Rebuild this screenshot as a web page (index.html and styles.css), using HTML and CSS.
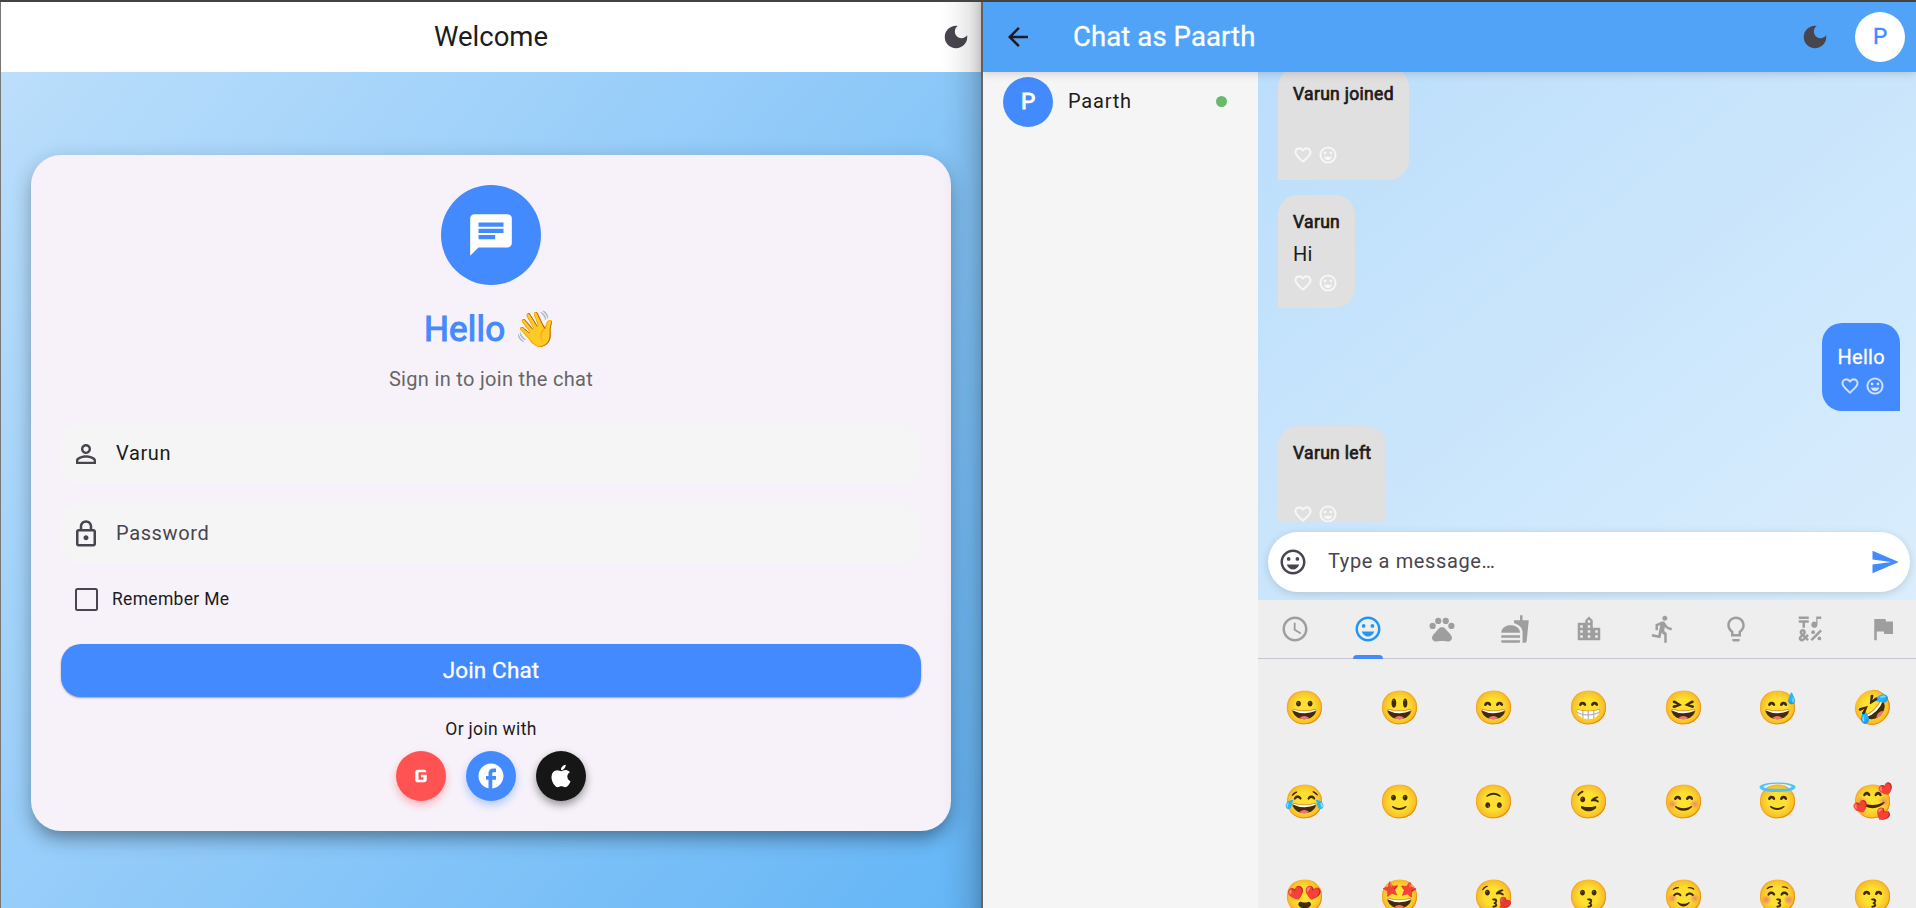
FILE: index.html
```
<!DOCTYPE html>
<html lang="en">
<head>
<meta charset="utf-8">
<title>Chat</title>
<link rel="stylesheet" href="styles.css">
</head>
<body>
<svg class="defs" width="0" height="0">
  <symbol id="moon" viewBox="0 0 24 24"><path d="M12 3C7.03 3 3 7.03 3 12s4.03 9 9 9 9-4.03 9-9c0-.46-.04-.92-.1-1.36C19.92 12.01 18.32 12.9 16.5 12.9 13.52 12.9 11.1 10.48 11.1 7.5 11.1 5.69 11.99 4.08 13.36 3.1 12.92 3.04 12.46 3 12 3z"/></symbol>
  <symbol id="smile" viewBox="0 0 24 24"><path d="M11.99 2C6.47 2 2 6.48 2 12s4.47 10 9.99 10C17.52 22 22 17.52 22 12S17.52 2 11.99 2zM12 20c-4.42 0-8-3.58-8-8s3.58-8 8-8 8 3.58 8 8-3.58 8-8 8z"/><circle cx="8.5" cy="9.5" r="1.5"/><circle cx="15.5" cy="9.5" r="1.5"/><path d="M12 18c2.28 0 4.22-1.66 5-4H7c.78 2.34 2.72 4 5 4z"/></symbol>
  <symbol id="heart" viewBox="0 0 24 24"><path d="M16.5 3c-1.74 0-3.41.81-4.5 2.09C10.91 3.81 9.24 3 7.5 3 4.42 3 2 5.42 2 8.5c0 3.78 3.4 6.86 8.55 11.54L12 21.35l1.45-1.32C18.6 15.36 22 12.28 22 8.5 22 5.42 19.58 3 16.5 3zm-4.4 15.55l-.1.1-.1-.1C7.14 14.24 4 11.39 4 8.5 4 6.5 5.5 5 7.5 5c1.54 0 3.04.99 3.57 2.36h1.87C13.46 5.99 14.96 5 16.5 5c2 0 3.5 1.5 3.5 3.5 0 2.89-3.14 5.74-7.9 10.05z"/></symbol>
</svg>

<div class="screen">
  <section class="login">
    <header class="login-bar">
      <h1 class="bar-title">Welcome</h1>
      <svg class="icon moon"><use href="#moon"/></svg>
    </header>
    <main class="login-body">
      <div class="card">
        <div class="logo">
          <svg class="logo-icon" viewBox="0 0 24 24"><path d="M20 2H4c-1.1 0-1.99.9-1.99 2L2 22l4-4h14c1.1 0 2-.9 2-2V4c0-1.1-.9-2-2-2zM6 9h12v2H6V9zm8 5H6v-2h8v2zm4-6H6V6h12v2z"/></svg>
        </div>
        <h2 class="hello">Hello <span class="wave">👋</span></h2>
        <p class="subtitle">Sign in to join the chat</p>
        <div class="field">
          <svg class="icon" viewBox="0 0 24 24"><path d="M12 5.9c1.16 0 2.1.94 2.1 2.1s-.94 2.1-2.1 2.1S9.9 9.16 9.9 8s.94-2.1 2.1-2.1m0 9c2.97 0 6.1 1.46 6.1 2.1v1.1H5.9V17c0-.64 3.13-2.1 6.1-2.1M12 4C9.79 4 8 5.79 8 8s1.79 4 4 4 4-1.79 4-4-1.79-4-4-4zm0 9c-2.67 0-8 1.34-8 4v3h16v-3c0-2.66-5.33-4-8-4z"/></svg>
          <span class="field-value">Varun</span>
        </div>
        <div class="field">
          <svg class="icon" viewBox="0 0 24 24"><path d="M18 8h-1V6c0-2.76-2.24-5-5-5S7 3.24 7 6v2H6c-1.1 0-2 .9-2 2v10c0 1.1.9 2 2 2h12c1.1 0 2-.9 2-2V10c0-1.1-.9-2-2-2zM9 6c0-1.66 1.34-3 3-3s3 1.34 3 3v2H9V6zm9 14H6V10h12v10zm-6-3c1.1 0 2-.9 2-2s-.9-2-2-2-2 .9-2 2 .9 2 2 2z"/></svg>
          <span class="field-hint">Password</span>
        </div>
        <label class="remember"><span class="box"></span>Remember Me</label>
        <button class="join">Join Chat</button>
        <p class="or">Or join with</p>
        <div class="social">
          <span class="social-btn google"><svg class="icon" viewBox="0 0 24 24"><path d="M12 11v2h2v2h-4V9h6.2V8.5c0-.9-.7-1.6-1.6-1.6H9.4c-1.2 0-2 .9-2 2v6.2c0 1.2.9 2 2 2h5.2c1.1 0 2-.9 2-2V11z"/></svg></span>
          <span class="social-btn facebook"><svg class="icon" viewBox="0 0 24 24"><path d="M22 12c0-5.52-4.48-10-10-10S2 6.48 2 12c0 4.84 3.44 8.87 8 9.8V15H8v-3h2V9.5C10 7.57 11.57 6 13.5 6H16v3h-2c-.55 0-1 .45-1 1v2h3v3h-3v6.95c5.05-.5 9-4.76 9-9.95z"/></svg></span>
          <span class="social-btn apple"><svg class="icon" viewBox="0 0 24 24"><path d="M17.05 20.28c-.98.95-2.05.8-3.08.35-1.09-.46-2.09-.48-3.24 0-1.44.62-2.2.44-3.06-.35C2.79 15.25 3.51 7.59 9.05 7.31c1.35.07 2.29.74 3.08.8 1.18-.24 2.31-.93 3.57-.84 1.51.12 2.65.72 3.4 1.8-3.12 1.87-2.38 5.98.48 7.13-.57 1.5-1.31 2.99-2.54 4.09zM12.03 7.25c-.15-2.23 1.66-4.07 3.74-4.25.29 2.58-2.34 4.5-3.74 4.25z"/></svg></span>
        </div>
      </div>
    </main>
    <div class="edge-shade"></div>
  </section>

  <section class="chat">
    <header class="chat-bar">
      <svg class="icon back" viewBox="0 0 24 24"><path d="M20 11H7.83l5.59-5.59L12 4l-8 8 8 8 1.41-1.41L7.83 13H20v-2z"/></svg>
      <h1 class="bar-title chat-title">Chat as Paarth</h1>
      <svg class="icon moon"><use href="#moon"/></svg>
      <span class="avatar avatar-light">P</span>
    </header>
    <div class="chat-body">
      <aside class="users">
        <div class="user"><span class="avatar">P</span><span class="user-name">Paarth</span><span class="online"></span></div>
      </aside>
      <main class="room">
        <div class="messages">
          <div class="bubble"><b class="author">Varun joined</b><p class="text"></p><div class="react"><svg><use href="#heart"/></svg><svg><use href="#smile"/></svg></div></div>
          <div class="bubble"><b class="author">Varun</b><p class="text">Hi</p><div class="react"><svg><use href="#heart"/></svg><svg><use href="#smile"/></svg></div></div>
          <div class="bubble mine"><p class="text">Hello</p><div class="react"><svg><use href="#heart"/></svg><svg><use href="#smile"/></svg></div></div>
          <div class="bubble"><b class="author">Varun left</b><p class="text"></p><div class="react"><svg><use href="#heart"/></svg><svg><use href="#smile"/></svg></div></div>
        </div>
        <div class="composer">
          <svg class="icon"><use href="#smile"/></svg>
          <span class="placeholder">Type a message…</span>
          <svg class="icon send" viewBox="0 0 24 24"><path d="M2.01 21L23 12 2.01 3 2 10l15 2-15 2z"/></svg>
        </div>
        <div class="picker">
          <nav class="tabs">
            <span class="tab"><svg class="icon" viewBox="0 0 24 24"><path d="M11.99 2C6.47 2 2 6.48 2 12s4.47 10 9.99 10C17.52 22 22 17.52 22 12S17.52 2 11.99 2zM12 20c-4.42 0-8-3.58-8-8s3.58-8 8-8 8 3.58 8 8-3.58 8-8 8zm.5-13H11v6l5.25 3.15.75-1.23-4.5-2.67z"/></svg></span>
            <span class="tab active"><svg class="icon"><use href="#smile"/></svg></span>
            <span class="tab"><svg class="icon" viewBox="0 0 24 24"><circle cx="4.5" cy="9.5" r="2.5"/><circle cx="9" cy="5.5" r="2.5"/><circle cx="15" cy="5.5" r="2.5"/><circle cx="19.5" cy="9.5" r="2.5"/><path d="M17.34 14.86c-.87-1.02-1.6-1.89-2.48-2.91-.46-.54-1.05-1.08-1.75-1.32-.11-.04-.22-.07-.33-.09-.25-.04-.52-.04-.78-.04s-.53 0-.79.05c-.11.02-.22.05-.33.09-.7.24-1.28.78-1.75 1.32-.87 1.02-1.6 1.89-2.48 2.91-1.31 1.31-2.92 2.76-2.62 4.79.29 1.02 1.02 2.03 2.33 2.32.73.15 3.06-.44 5.54-.44h.18c2.48 0 4.81.58 5.54.44 1.31-.29 2.04-1.31 2.33-2.32.31-2.04-1.3-3.49-2.61-4.8z"/></svg></span>
            <span class="tab"><svg class="icon" viewBox="0 0 24 24"><path d="M18.06 22.99h1.66c.84 0 1.53-.64 1.63-1.46L23 5.05h-5V1h-1.97v4.05h-4.97l.3 2.34c1.71.47 3.31 1.32 4.27 2.26 1.44 1.42 2.43 2.89 2.43 5.29v8.05zM1 21.99V21h15.03v.99c0 .55-.45 1-1.01 1H2.01c-.56 0-1.01-.45-1.01-1zm15.03-7c0-8-15.03-8-15.03 0h15.03zM1.02 17h15v2h-15z"/></svg></span>
            <span class="tab"><svg class="icon" viewBox="0 0 24 24"><path d="M15 11V5l-3-3-3 3v2H3v14h18V11h-6zm-8 8H5v-2h2v2zm0-4H5v-2h2v2zm0-4H5V9h2v2zm6 8h-2v-2h2v2zm0-4h-2v-2h2v2zm0-4h-2V9h2v2zm0-4h-2V5h2v2zm6 12h-2v-2h2v2zm0-4h-2v-2h2v2z"/></svg></span>
            <span class="tab"><svg class="icon" viewBox="0 0 24 24"><path d="M13.49 5.48c1.1 0 2-.9 2-2s-.9-2-2-2-2 .9-2 2 .9 2 2 2zm-3.6 13.9l1-4.4 2.1 2v6h2v-7.5l-2.1-2 .6-3c1.3 1.5 3.3 2.5 5.5 2.5v-2c-1.9 0-3.5-1-4.3-2.4l-1-1.6c-.4-.6-1-1-1.7-1-.3 0-.5.1-.8.1l-5.2 2.2v4.7h2v-3.4l1.8-.7-1.6 8.1-4.9-1-.4 2 7 1.4z"/></svg></span>
            <span class="tab"><svg class="icon" viewBox="0 0 24 24"><path d="M9 20h6v.8c0 .7-.5 1.2-1.2 1.2h-3.6c-.7 0-1.2-.5-1.2-1.2zM12 2C8.14 2 5 5.14 5 9c0 2.38 1.19 4.47 3 5.74V18h8v-3.26c1.81-1.27 3-3.36 3-5.74 0-3.86-3.14-7-7-7zm2.85 11.1l-.85.6V16h-4v-2.3l-.85-.6A5 5 0 0 1 7 9c0-2.76 2.24-5 5-5s5 2.24 5 5c0 1.63-.8 3.16-2.15 4.1z"/></svg></span>
            <span class="tab"><svg class="icon" viewBox="0 0 24 24"><path d="M3 2h8v2H3zM6 11h2V7h3V5H3v2h3zM12.404 20.182l7.778-7.778 1.414 1.414-7.778 7.778z"/><circle cx="14.5" cy="14.5" r="1.5"/><circle cx="19.5" cy="19.5" r="1.5"/><path d="M15.5 11c1.38 0 2.5-1.12 2.5-2.5V4h3V2h-4v4.51c-.42-.32-.93-.51-1.5-.51C14.12 6 13 7.12 13 8.5s1.12 2.5 2.5 2.5z"/><path d="M9.74 15.96l-1.41 1.41-.71-.71.35-.35c.98-.98.98-2.56 0-3.54-.49-.49-1.13-.73-1.77-.73-.64 0-1.28.24-1.77.73-.98.98-.98 2.56 0 3.54l.35.35-1.06 1.06c-.98.98-.98 2.56 0 3.54.5.5 1.14.74 1.78.74s1.28-.24 1.77-.73l1.06-1.06 1.41 1.41 1.41-1.41-1.41-1.41 1.41-1.41-1.41-1.43zM5.85 14.2c.12-.12.26-.15.35-.15s.23.03.35.15c.19.2.19.51 0 .71l-.35.35-.35-.36c-.19-.19-.19-.51 0-.7zm0 5.65c-.12.12-.26.15-.35.15s-.23-.03-.35-.15c-.19-.2-.19-.51 0-.71L6.2 18.08l.71.71-1.06 1.06z"/></svg></span>
            <span class="tab"><svg class="icon" viewBox="0 0 24 24"><path d="M14.4 6L14 4H5v17h2v-7h5.6l.4 2h7V6z"/></svg></span>
          </nav>
          <div class="emojis">
            <span>😀</span><span>😃</span><span>😄</span><span>😁</span><span>😆</span><span>😅</span><span>🤣</span>
            <span>😂</span><span>🙂</span><span>🙃</span><span>😉</span><span>😊</span><span>😇</span><span>🥰</span>
            <span>😍</span><span>🤩</span><span>😘</span><span>😗</span><span>☺️</span><span>😚</span><span>😙</span>
          </div>
        </div>
      </main>
    </div>
  </section>
</div>
</body>
</html>
```
FILE: styles.css
```
* { box-sizing: border-box; }
body {
  margin: 0;
  font-family: Roboto, "Noto Color Emoji", sans-serif;
  color: #1d1b20;
  overflow: hidden;
}
h1, h2, p { margin: 0; }
svg { display: block; fill: currentColor; }
.defs { position: absolute; }
.icon { width: 30px; height: 30px; flex: none; }
.screen {
  display: flex;
  width: 1916px;
  height: 908px;
  border-top: 2px solid #444;
}

/* Login window */
.login {
  position: relative;
  width: 981px;
  display: flex;
  flex-direction: column;
  border-left: 1px solid #777;
}
.login-bar {
  height: 70px;
  padding: 0 10px 0 40px;
  display: flex;
  align-items: center;
  background: #fff;
}
.bar-title {
  flex: 1;
  margin-top: -2px;
  text-align: center;
  font-size: 27.5px;
  font-weight: 400;
  line-height: 35px;
}
.moon { color: #49454f; }
.login-body {
  flex: 1;
  display: flex;
  flex-direction: column;
  justify-content: center;
  padding: 6px 30px 0;
  background: linear-gradient(130.5deg, #bbdefb, #90caf9 50%, #64b5f6);
}
.card {
  height: 676px;
  padding: 30px;
  display: flex;
  flex-direction: column;
  align-items: center;
  border-radius: 30px;
  background: #f7f2fa;
  box-shadow: 0 10px 14px -5px rgba(0,0,0,.22), 0 8px 20px 1px rgba(0,0,0,.17), 0 4px 24px 2px rgba(0,0,0,.06);
}
.logo {
  width: 100px;
  height: 100px;
  flex: none;
  display: grid;
  place-items: center;
  border-radius: 50%;
  background: #448aff;
  color: #fff;
}
.logo-icon { width: 50px; height: 50px; }
.hello {
  margin-top: 20px;
  height: 50px;
  line-height: 50px;
  font-size: 35px;
  font-weight: 400;
  letter-spacing: .2px;
  -webkit-text-stroke: 1.1px currentColor;
  color: #448aff;
}
.subtitle {
  margin-top: 9px;
  line-height: 30px;
  font-size: 20px;
  letter-spacing: .3125px;
  color: #666;
}
.field {
  width: 100%;
  height: 60px;
  margin-top: 20px;
  padding: 0 10px;
  display: flex;
  align-items: center;
  gap: 15px;
  border-radius: 20px;
  background: #f5f5f5;
  font-size: 20px;
  letter-spacing: .625px;
  color: #49454f;
}
.subtitle + .field { margin-top: 30px; }
.field-value { color: #1d1b20; }
.field-value, .field-hint { margin-top: -1px; }
.remember {
  align-self: flex-start;
  height: 50px;
  margin: 11px 0 0 14px;
  display: flex;
  align-items: center;
  gap: 14px;
  font-size: 17.5px;
  letter-spacing: .3125px;
}
.box {
  width: 23px;
  height: 23px;
  border: 2.5px solid #49454f;
  border-radius: 2.5px;
}
.join {
  width: 100%;
  height: 53px;
  margin-top: 20px;
  padding: 0 0 2px;
  border: 0;
  border-radius: 20px;
  background: #448aff;
  color: #fff;
  font: 400 22.5px Roboto, sans-serif;
  letter-spacing: .15px;
  -webkit-text-stroke: .3px currentColor;
  box-shadow: 0 1px 2px rgba(0,0,0,.35);
}
.or {
  margin-top: 20px;
  line-height: 25px;
  font-size: 17.5px;
  letter-spacing: .3125px;
}
.social { display: flex; gap: 20px; margin-top: 9px; }
.social-btn {
  width: 50px;
  height: 50px;
  display: grid;
  place-items: center;
  border-radius: 50%;
  color: #fff;
}
.google { background: #ff5252; box-shadow: 0 4px 8px rgba(255,82,82,.4); }
.facebook { background: #448aff; box-shadow: 0 4px 8px rgba(68,138,255,.4); }
.apple { background: #161616; box-shadow: 0 4px 8px rgba(0,0,0,.4); }
.edge-shade {
  position: absolute;
  top: 0;
  right: 0;
  width: 40px;
  height: 100%;
  background: linear-gradient(to left, rgba(0,0,0,.2), rgba(0,0,0,.09) 30%, rgba(0,0,0,.03) 65%, transparent);
}

/* Chat window */
.chat {
  width: 935px;
  display: flex;
  flex-direction: column;
  border-left: 2px solid #666;
}
.chat-bar {
  position: relative;
  z-index: 1;
  height: 70px;
  padding: 0 11px 0 20px;
  display: flex;
  align-items: center;
  background: #50a3f7;
  box-shadow: 0 2px 8px rgba(0,0,0,.15);
}
.chat-title {
  padding-left: 40px;
  text-align: left;
  letter-spacing: .1px;
  -webkit-text-stroke: .3px currentColor;
  color: #fff;
}
.avatar {
  width: 50px;
  height: 50px;
  display: grid;
  place-items: center;
  padding-bottom: 2px;
  border-radius: 50%;
  background: #448aff;
  color: #fff;
  font-size: 22.5px;
  -webkit-text-stroke: .9px currentColor;
}
.avatar-light { margin-left: 25px; background: #fff; color: #448aff; -webkit-text-stroke-width: .4px; }
.chat-body { flex: 1; min-height: 0; display: flex; }
.users { width: 275px; padding: 5px 31px 0 20px; background: #f5f5f5; }
.user { display: flex; align-items: center; }
.user-name { flex: 1; margin-top: -2px; padding-left: 15px; font-size: 20px; letter-spacing: .8px; }
.online { width: 11px; height: 11px; margin-top: -1px; border-radius: 50%; background: #66bb6a; }
.room {
  width: 658px;
  display: flex;
  flex-direction: column;
  background: linear-gradient(141.8deg, #bbdefb, #e3f2fd);
}
.messages {
  height: 450px;
  padding: 0 16px 0 20px;
  display: flex;
  flex-direction: column;
  align-items: flex-start;
  gap: 15px;
  overflow: hidden;
}
.bubble {
  flex: none;
  padding: 15px;
  border-radius: 20px 20px 20px 0;
  background: #e0e0e0;
}
.bubble:first-child { margin-top: -5.5px; }
.author {
  display: block;
  height: 25px;
  line-height: 25px;
  font-size: 17.5px;
  font-weight: 400;
  letter-spacing: .3125px;
  -webkit-text-stroke: .7px currentColor;
}
.text { height: 30px; margin: 4px 0 4px; line-height: 30px; font-size: 20px; letter-spacing: .3px; }
.react { display: flex; gap: 5px; color: rgba(255,255,255,.75); }
.react svg { width: 20px; height: 20px; }
.react use { stroke: currentColor; stroke-width: .3; }
.mine {
  align-self: flex-end;
  padding-top: 15.5px;
  border-radius: 20px 20px 0 20px;
  background: #448aff;
  color: #fff;
}
.mine .text { -webkit-text-stroke: .3px currentColor; }
.mine .react { justify-content: flex-end; }
.composer {
  height: 60px;
  margin: 9.5px 6px 8.5px 10px;
  padding: 0 10px;
  display: flex;
  align-items: center;
  border-radius: 30px;
  background: #fff;
  color: #49454f;
  box-shadow: 0 2px 8px rgba(0,0,0,.14);
}
.placeholder { flex: 1; margin-top: -1px; padding-left: 20px; font-size: 20px; letter-spacing: .625px; }
.send { color: #448aff; }
.picker { height: 308px; background: #eee; overflow: hidden; }
.tabs { width: 662px; height: 59px; display: grid; grid-template-columns: repeat(9, 1fr); border-bottom: 1px solid #c9c5d0; color: #9e9e9e; }
.tab { position: relative; display: grid; place-items: center; }
.active { color: #2196f3; }
.active::after {
  content: "";
  position: absolute;
  left: 50%;
  bottom: -1px;
  width: 30px;
  height: 4px;
  transform: translateX(-50%);
  border-radius: 4px 4px 0 0;
  background: #448aff;
}
.emojis {
  display: grid;
  grid-template-columns: repeat(7, 94.57px);
  grid-auto-rows: 94.5px;
  padding-top: 1px;
  font-family: "Noto Color Emoji", sans-serif;
  font-size: 33px;
}
.emojis span { display: grid; place-items: center; }
```
